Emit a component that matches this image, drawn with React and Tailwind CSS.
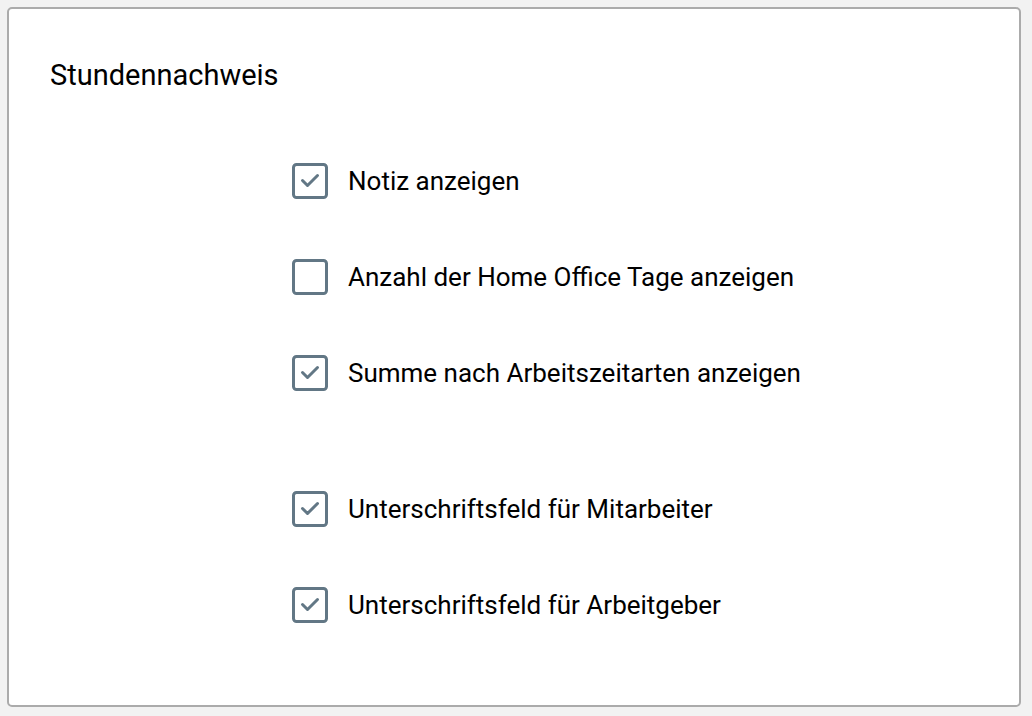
const options = [
  { label: 'Notiz anzeigen', checked: true },
  { label: 'Anzahl der Home Office Tage anzeigen', checked: false },
  { label: 'Summe nach Arbeitszeitarten anzeigen', checked: true },
  { label: 'Unterschriftsfeld für Mitarbeiter', checked: true, spaced: true },
  { label: 'Unterschriftsfeld für Arbeitgeber', checked: true },
]

function Checkbox({ checked }) {
  return (
    <svg width="36" height="36" viewBox="0 0 36 36" fill="none" className="flex-shrink-0">
      <rect x="1.5" y="1.5" width="33" height="33" rx="3" stroke="#627785" strokeWidth="3" />
      {checked && (
        <polyline points="10.5,17.5 15.5,22.5 25.5,12.5" stroke="#627785" strokeWidth="3" strokeLinecap="round" strokeLinejoin="round" />
      )}
    </svg>
  )
}

export default function App() {
  return (
    <div className="h-[716px] w-[1032px] bg-[#f2f2f2] p-[7px] font-['Roboto',sans-serif] text-black">
      <div className="h-[700px] w-[1014px] rounded-[5px] border-2 border-[#ababab] bg-white">
        {/* Title */}
        <div className="pl-[41px] pt-[50px] text-[29px] leading-[32px]">Stundennachweis</div>

        {/* Options */}
        <div className="mt-[72px] flex flex-col pl-[283px]">
          {options.map(({ label, checked, spaced }, i) => (
            <label
              key={label}
              className={`flex items-center gap-5 ${i === 0 ? '' : spaced ? 'mt-[100px]' : 'mt-[60px]'}`}
            >
              <Checkbox checked={checked} />
              <span className="text-[26px] leading-[36px]">{label}</span>
            </label>
          ))}
        </div>
      </div>
    </div>
  )
}
